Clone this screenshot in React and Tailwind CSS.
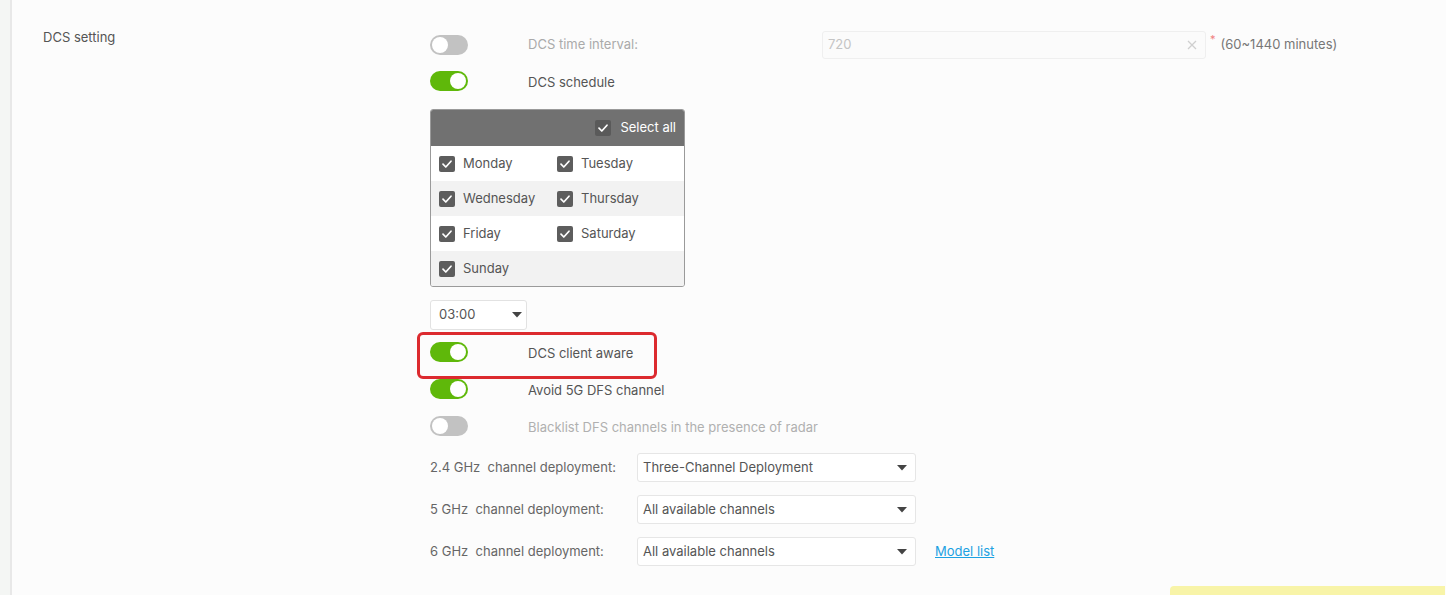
import React from "react";

const font = { fontFamily: "Inter, 'Noto Sans', sans-serif" };

function Toggle({ on }) {
  return (
    <div
      className={`relative h-[20px] w-[38px] rounded-full ${on ? "bg-[#5fb80a]" : "bg-[#c2c2c2]"}`}
    >
      <div
        className={`absolute top-[2px] h-[16px] w-[16px] rounded-full bg-white ${on ? "left-[20px]" : "left-[2px]"}`}
      />
    </div>
  );
}

function Check({ dark }) {
  return (
    <div
      className={`flex h-[16px] w-[16px] items-center justify-center rounded-[2px] ${dark ? "bg-[#5a5a5a]" : "bg-[#5d5d5d]"}`}
    >
      <svg width="12" height="12" viewBox="0 0 12 12">
        <polyline points="2,6.2 4.8,9 10,3.2" fill="none" stroke="white" strokeWidth="1.7" strokeLinecap="round" strokeLinejoin="round" />
      </svg>
    </div>
  );
}

function Caret() {
  return (
    <svg width="10" height="6" viewBox="0 0 10 6">
      <polygon points="0,0 10,0 5,5.5" fill="#444" />
    </svg>
  );
}

function Day({ name }) {
  return (
    <div className="flex w-[118px] items-center gap-[8px]">
      <Check />
      <span className="text-[13px] text-[#555]">{name}</span>
    </div>
  );
}

function DayRow({ a, b, shaded }) {
  return (
    <div className={`flex h-[35px] items-center pl-[8px] ${shaded ? "bg-[#f2f2f2]" : "bg-white"}`}>
      <Day name={a} />
      {b && <Day name={b} />}
    </div>
  );
}

function ToggleRow({ on, label, disabled }) {
  return (
    <div className="flex h-[22px] items-center">
      <div className="w-[98px]">
        <Toggle on={on} />
      </div>
      <span className={`text-[13px] ${disabled ? "text-[#b0b0b0]" : "text-[#555]"} translate-y-[2px]`}>{label}</span>
    </div>
  );
}

function Deploy({ ghz, value, link }) {
  return (
    <div className="flex items-center">
      <div className="w-[207px] whitespace-pre text-[13px] text-[#666]">{ghz}</div>
      <div className="flex h-[29px] w-[279px] items-center justify-between rounded-[3px] border border-[#e6e6e6] bg-white pl-[5px] pr-[8px]">
        <span className="text-[13px] text-[#555]">{value}</span>
        <Caret />
      </div>
      {link && (
        <a className="ml-[19px] text-[13px] text-[#1ca1e2] underline" href="#">
          Model list
        </a>
      )}
    </div>
  );
}

export default function App() {
  return (
    <div className="flex h-[595px] overflow-hidden bg-[#f4f6f4]" style={font}>
      <div className="w-[10px] shrink-0" />
      <div className="relative flex-1 border-l-2 border-[#e8e8e8] bg-[#fcfcfc]">
        <div className="flex pl-[31px]">
          <div className="w-[387px] shrink-0 pt-[28px] text-[13px] text-[#555]">DCS setting</div>
          <div className="flex flex-col pt-[31px]">
            {/* Row A */}
            <div className="flex h-[28px] items-center">
              <div className="w-[98px]">
                <Toggle on={false} />
              </div>
              <span className="w-[294px] text-[13px] text-[#aaa]">DCS time interval:</span>
              <div className="flex h-[28px] w-[384px] items-center justify-between rounded-[3px] border border-[#efefef] bg-[#fbfbfb] pl-[5px] pr-[8px]">
                <span className="text-[13px] text-[#c4c4c4]">720</span>
                <svg width="10" height="10" viewBox="0 0 10 10">
                  <path d="M1 1 L9 9 M9 1 L1 9" stroke="#cfcfcf" strokeWidth="1.3" />
                </svg>
              </div>
              <span className="ml-[4px] self-start text-[11px] leading-[16px] text-[#f08080]">*</span>
              <span className="ml-[5px] text-[13px] text-[#777]">(60~1440 minutes)</span>
            </div>

            {/* Row B */}
            <div className="mt-[11px]">
              <ToggleRow on label="DCS schedule" />
            </div>

            {/* Table */}
            <div className="mt-[17px] w-[255px] overflow-hidden rounded-[3px] border border-[#9a9a9a]">
              <div className="flex h-[36px] items-center justify-end gap-[9px] bg-[#717171] pr-[8px]">
                <Check dark />
                <span className="text-[13px] text-white">Select all</span>
              </div>
              <DayRow a="Monday" b="Tuesday" />
              <DayRow a="Wednesday" b="Thursday" shaded />
              <DayRow a="Friday" b="Saturday" />
              <DayRow a="Sunday" shaded />
            </div>

            {/* Time */}
            <div className="mt-[13px] flex h-[30px] w-[97px] items-center justify-between rounded-[3px] border border-[#e2e2e2] bg-white pl-[8px] pr-[4px]">
              <span className="text-[13px] text-[#555]">03:00</span>
              <Caret />
            </div>

            {/* Toggles */}
            <div className="relative mt-[11px]">
              <div className="absolute left-[-13px] top-[-9px] h-[47px] w-[240px] rounded-[6px] border-[3px] border-[#dc2a2f]" />
              <ToggleRow on label="DCS client aware" />
            </div>
            <div className="mt-[15px]">
              <ToggleRow on label="Avoid 5G DFS channel" />
            </div>
            <div className="mt-[15px]">
              <ToggleRow on={false} label="Blacklist DFS channels in the presence of radar" disabled />
            </div>

            {/* Deployments */}
            <div className="mt-[16px] flex flex-col gap-[13px]">
              <Deploy ghz={"2.4 GHz  channel deployment:"} value="Three-Channel Deployment" />
              <Deploy ghz={"5 GHz  channel deployment:"} value="All available channels" />
              <Deploy ghz={"6 GHz  channel deployment:"} value="All available channels" link />
            </div>
          </div>
        </div>
        <div className="absolute bottom-[-4px] right-[1px] h-[13px] w-[275px] rounded-tl-[4px] bg-[#f8f4a8]" />
      </div>
    </div>
  );
}
